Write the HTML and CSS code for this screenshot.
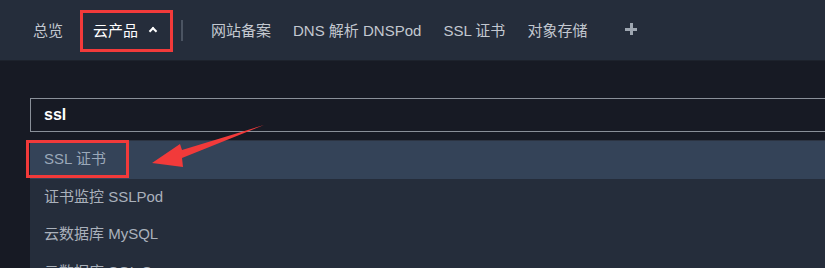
FILE: index.html
```html
<!DOCTYPE html>
<html lang="zh-CN">
     <head>
          <meta charset="UTF-8" />
          <meta name="viewport" content="width=device-width, initial-scale=1.0" />
          <title>云产品</title>
          <link rel="stylesheet" href="styles.css">
     </head>
     <body>
          <nav class="topbar">
               <a class="nav-item" href="#">总览</a>
               <a class="nav-item active marked" href="#">云产品 <span class="chevron"></span></a>
               <span class="divider"></span>
               <a class="nav-item" href="#">网站备案</a>
               <a class="nav-item" href="#">DNS 解析 DNSPod</a>
               <a class="nav-item" href="#">SSL 证书</a>
               <a class="nav-item" href="#">对象存储</a>
               <span class="plus"></span>
          </nav>

          <div class="panel">
               <div class="search">ssl</div>
               <ul class="results">
                    <li class="current">SSL 证书</li>
                    <li>证书监控 SSLPod</li>
                    <li>云数据库 MySQL</li>
                    <li>云数据库 SQL Server</li>
               </ul>
          </div>

          <div class="mark-box"></div>
          <svg class="mark-arrow" width="130" height="50" viewBox="0 0 130 50">
               <polygon points="122,1 40,26 38,20 10,39 41,43 40,34" fill="#f23a3a" />
          </svg>
     </body>
</html>
```

FILE: styles.css
```css
* {
     padding: 0;
     margin: 0;
     box-sizing: border-box;
}
body {
     background-color: #171a24;
     font-family: "Liberation Sans", "Noto Sans CJK SC", sans-serif;
     font-size: 15px;
     overflow: hidden;
     height: 268px;
}
.topbar {
     height: 61px;
     background-color: #252d3b;
     border-bottom: 1px solid #1d222c;
     display: flex;
     align-items: center;
     padding-left: 33px;
     padding-bottom: 2px;
}
.nav-item {
     text-decoration: none;
     color: #c3c8d0;
     margin-right: 22px;
     white-space: nowrap;
}
.nav-item.active {
     color: #ffffff;
}
.nav-item.marked {
     margin-left: -5px;
     margin-right: 0;
     width: 93px;
     height: 42px;
     margin-top: 3px;
     border: 3px solid #f23a3a;
     display: flex;
     align-items: center;
     padding-left: 10px;
     padding-bottom: 3px;
}
.chevron {
     width: 6px;
     height: 6px;
     border-left: 2px solid #ffffff;
     border-top: 2px solid #ffffff;
     transform: rotate(45deg);
     margin-left: 12px;
     margin-top: 3px;
}
.divider {
     width: 2px;
     height: 21px;
     background-color: #4b5462;
     margin: 2px 28px 0 8px;
}
.plus {
     position: relative;
     width: 12px;
     height: 12px;
     margin-left: 16px;
}
.plus::before,
.plus::after {
     content: "";
     position: absolute;
     background-color: #9ea6b1;
}
.plus::before {
     left: 0;
     top: 5px;
     width: 12px;
     height: 3px;
}
.plus::after {
     left: 5px;
     top: 0;
     width: 3px;
     height: 12px;
}

.panel {
     margin-left: 30px;
     padding-top: 37px;
     width: 900px;
}
.search {
     height: 34px;
     border: 1px solid #8a9099;
     color: #ffffff;
     font-size: 16px;
     font-weight: bold;
     padding-left: 13px;
     line-height: 32px;
}
.results {
     list-style-type: none;
     margin-top: 8px;
     background-color: #252d3b;
     border-top: 1px solid #2c3442;
}
.results li {
     height: 37.5px;
     line-height: 36px;
     padding-left: 14px;
     color: #aab1bb;
}
.results li.current {
     background-color: #344358;
     color: #9ba8b9;
}

.mark-box {
     position: absolute;
     left: 26px;
     top: 140px;
     width: 103px;
     height: 38px;
     border: 3px solid #f23a3a;
}
.mark-arrow {
     position: absolute;
     left: 142px;
     top: 124px;
}
```
